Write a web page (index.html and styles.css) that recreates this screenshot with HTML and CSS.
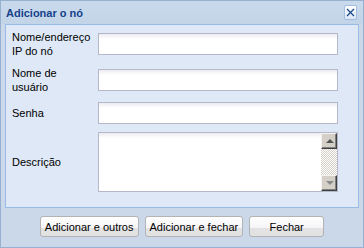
FILE: index.html
```html
<!DOCTYPE html>
<html lang="pt">
<head>
    <meta charset="UTF-8">
    <title>Adicionar o nó</title>
    <link rel="stylesheet" href="styles.css">
</head>
<body>
<div class="window">
    <div class="window-header">
        <span class="window-title">Adicionar o nó</span>
        <button class="tool-close" type="button" title="Fechar">
            <svg width="9" height="9" viewBox="0 0 9 9">
                <path d="M1 1L8 8M8 1L1 8" stroke="#1d4a8c" stroke-width="1.3" fill="none"/>
            </svg>
        </button>
    </div>

    <div class="window-body">
        <form class="node-form">
            <div class="form-row">
                <label class="form-label" for="node-address">Nome/endereço IP do nó</label>
                <input type="text" id="node-address" class="form-field">
            </div>
            <div class="form-row">
                <label class="form-label" for="node-user">Nome de usuário</label>
                <input type="text" id="node-user" class="form-field">
            </div>
            <div class="form-row">
                <label class="form-label" for="node-password">Senha</label>
                <input type="password" id="node-password" class="form-field">
            </div>
            <div class="form-row">
                <label class="form-label" for="node-description">Descrição</label>
                <div class="textarea-wrap">
                    <textarea id="node-description" class="form-textarea"></textarea>
                    <div class="scrollbar">
                        <span class="scroll-btn scroll-up"></span>
                        <span class="scroll-track"></span>
                        <span class="scroll-btn scroll-down"></span>
                    </div>
                </div>
            </div>
        </form>
    </div>

    <div class="window-footer">
        <button type="button" class="btn">Adicionar e outros</button>
        <button type="button" class="btn">Adicionar e fechar</button>
        <button type="button" class="btn btn-close">Fechar</button>
    </div>
</div>
</body>
</html>
```

FILE: styles.css
```css
body {
    margin: 0;
    font-family: "Liberation Sans", Arial, sans-serif;
    font-size: 11px;
    color: #000;
}

.window {
    width: 364px;
    height: 248px;
    box-sizing: border-box;
    border: 1px solid #98b0cf;
    background-color: #cbd8ea;
}

.window-header {
    height: 23px;
    display: flex;
    align-items: center;
    justify-content: space-between;
    padding: 0 6px 0 5px;
    background: linear-gradient(#c9daec, #c2d4e7);
}

.window-title {
    font-weight: bold;
    color: #15428b;
}

.tool-close {
    width: 13px;
    height: 15px;
    padding: 0;
    border: 1px solid #a3bde0;
    border-radius: 2px;
    background: linear-gradient(#ffffff, #dce7f6);
    display: flex;
    align-items: center;
    justify-content: center;
}

.window-body {
    margin: 0 4px;
    height: 184px;
    box-sizing: border-box;
    border: 1px solid #99bbe8;
    background-color: #dfe8f6;
    padding: 5px 0 0 6px;
}

.node-form {
    display: flex;
    flex-direction: column;
    gap: 8px;
}

.form-row {
    display: flex;
    align-items: center;
}

.form-label {
    width: 80px;
    margin-right: 6px;
    line-height: 14px;
}

.form-field {
    width: 240px;
    height: 22px;
    box-sizing: border-box;
    margin: 0;
    border: 1px solid #b5b8c8;
    background: linear-gradient(#ecebf1, #ffffff 5px);
    font: inherit;
    padding: 0 3px;
}

.textarea-wrap {
    width: 240px;
    height: 60px;
    box-sizing: border-box;
    border: 1px solid #b5b8c8;
    background: linear-gradient(#ecebf1, #ffffff 5px);
    display: flex;
}

.form-textarea {
    flex: 1;
    border: none;
    background: transparent;
    resize: none;
    margin: 0;
    padding: 2px 3px;
    font: inherit;
}

.scrollbar {
    width: 16px;
    display: flex;
    flex-direction: column;
}

.scroll-btn {
    height: 16px;
    box-sizing: border-box;
    background-color: #d4d0c8;
    border-top: 1px solid #f4f3ef;
    border-left: 1px solid #f4f3ef;
    border-right: 1px solid #404040;
    border-bottom: 1px solid #404040;
    box-shadow: inset -1px -1px 0 #808080;
    position: relative;
}

.scroll-btn::after {
    content: "";
    position: absolute;
    left: 4px;
    top: 5px;
    border-left: 4px solid transparent;
    border-right: 4px solid transparent;
}

.scroll-up::after {
    border-bottom: 4px solid #555;
}

.scroll-down::after {
    border-top: 4px solid #8a8a8a;
}

.scroll-track {
    flex: 1;
    background-color: #ffffff;
    background-image: repeating-conic-gradient(#d4d0c8 0 25%, #ffffff 0 50%);
    background-size: 2px 2px;
}

.window-footer {
    display: flex;
    justify-content: center;
    gap: 6px;
    padding-top: 8px;
}

.btn {
    height: 21px;
    min-width: 75px;
    padding: 0 4px;
    border: 1px solid #b3b3b3;
    border-radius: 3px;
    background: linear-gradient(#ffffff, #f5f3f6 60%, #e2e2e2 60%, #e2e2e2);
    font: inherit;
    color: #000;
    cursor: pointer;
}
```
